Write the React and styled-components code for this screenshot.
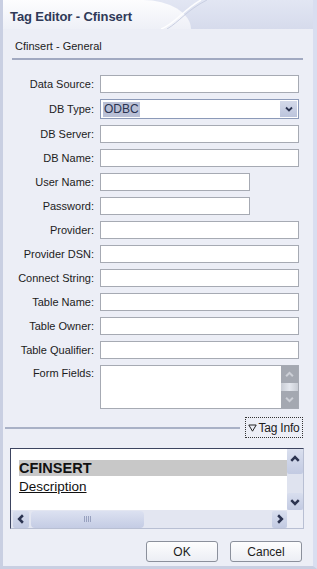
import React from 'react';
import styled, { createGlobalStyle } from 'styled-components';

const GlobalStyle = createGlobalStyle`
  html, body {
    margin: 0;
    padding: 0;
    background: #eceef6;
  }
  * { box-sizing: border-box; }
`;

const Window = styled.div`
  width: 317px;
  height: 569px;
  display: flex;
  flex-direction: column;
  background: #eceef6;
  border-left: 3px solid #c9cfe2;
  border-right: 4px solid #d9def0;
  border-bottom: 3px solid #c9cfe2;
  font-family: "Liberation Sans", Arial, sans-serif;
  overflow: hidden;
`;

const TitleBar = styled.div`
  height: 29px;
  display: flex;
  background: linear-gradient(#e2e6f3, #d6dbec);
  position: relative;
`;

const TitleTab = styled.div`
  width: 188px;
  display: flex;
  align-items: center;
  padding-left: 7px;
  padding-top: 3px;
  background: linear-gradient(#fdfdfe, #eef0f7);
  border-top-right-radius: 48px 29px;
  color: #2f3a58;
  font-weight: bold;
  font-size: 13px;
  letter-spacing: -0.1px;
`;

const Swoosh = styled.svg`
  position: absolute;
  left: 150px;
  top: 0;
`;

const Body = styled.div`
  flex: 1;
  display: flex;
  flex-direction: column;
`;

const SectionHeader = styled.div`
  margin: 11px 10px 0 9px;
  padding: 0 0 6px 3px;
  font-size: 11px;
  color: #1c1c1c;
  border-bottom: 2px solid #a1a9c1;
`;

const FormGrid = styled.div`
  display: grid;
  grid-template-columns: 82px 199px;
  column-gap: 6px;
  row-gap: 6px;
  align-items: center;
  margin: 15px 0 0 9px;
`;

const Label = styled.label`
  font-size: 11px;
  color: #1c1c1c;
  text-align: right;
  align-self: ${p => (p.$top ? 'start' : 'center')};
  padding-top: ${p => (p.$top ? '2px' : '0')};
`;

const TextInput = styled.div`
  width: ${p => (p.$short ? '150px' : '199px')};
  height: 18px;
  background: #fff;
  border: 1px solid #a6aab3;
`;

const Select = styled.div`
  width: 199px;
  height: 20px;
  display: flex;
  align-items: center;
  background: #fff;
  border: 1px solid #8c9ab8;
  padding: 1px;
`;

const SelectValue = styled.div`
  flex: 1;
  display: flex;
  align-items: center;
  font-size: 12px;
  color: #2a3350;
  padding-left: 1px;
`;

const Highlight = styled.span`
  background: #b9c0d6;
  padding: 0 1px;
  line-height: 15px;
`;

const SelectButton = styled.div`
  width: 17px;
  height: 16px;
  display: flex;
  align-items: center;
  justify-content: center;
  background: linear-gradient(#d4d9e9, #bcc4dc);
`;

const TextArea = styled.div`
  width: 199px;
  height: 44px;
  display: flex;
  justify-content: flex-end;
  background: #fff;
  border: 1px solid #a6aab3;
`;

const DisabledBar = styled.div`
  width: 17px;
  display: flex;
  flex-direction: column;
  background: #a9adb6;
`;

const DisabledButton = styled.div`
  height: 17px;
  display: flex;
  align-items: center;
  justify-content: center;
  background: #a4a8b1;
`;

const DisabledMid = styled.div`
  flex: 1;
  background: linear-gradient(90deg, #c8ccd4, #e4e7ee, #c8ccd4);
`;

const InfoRow = styled.div`
  display: flex;
  align-items: center;
  margin: 8px 0 0 2px;
  gap: 5px;
`;

const InfoLine = styled.div`
  flex: 1;
  height: 2px;
  background: #a9b1c6;
`;

const InfoButton = styled.div`
  width: 58px;
  height: 21px;
  display: flex;
  align-items: center;
  justify-content: center;
  gap: 1px;
  margin-right: 10px;
  border: 1px dotted #333;
  font-size: 12px;
  color: #1c1c1c;
  letter-spacing: -0.2px;
`;

const InfoPanel = styled.div`
  margin: 10px 9px 0 7px;
  height: 81px;
  display: grid;
  grid-template-columns: 1fr 16px;
  grid-template-rows: 1fr 18px;
  border-top: 1px solid #3c4460;
  border-left: 1px solid #3c4460;
  border-right: 1px solid #b8bfd3;
  border-bottom: 1px solid #b8bfd3;
  background: #fff;
`;

const ListArea = styled.div`
  padding: 11px 0 0 8px;
  display: flex;
  flex-direction: column;
`;

const TagName = styled.div`
  height: 16px;
  display: flex;
  align-items: center;
  background: #c8c8c8;
  font-weight: bold;
  font-size: 14.5px;
  color: #111;
`;

const DescLink = styled.div`
  margin-top: 3px;
  font-size: 13.5px;
  color: #111;
  text-decoration: underline;
`;

const VScroll = styled.div`
  display: flex;
  flex-direction: column;
  justify-content: space-between;
  background: #dfe3ef;
  padding-top: 1px;
`;

const ScrollBtn = styled.div`
  width: ${p => p.$w || '16px'};
  height: ${p => p.$h || '17px'};
  display: flex;
  align-items: ${p => (p.$alignTop ? 'flex-start' : 'center')};
  padding-top: ${p => (p.$alignTop ? '4px' : '0')};
  justify-content: center;
  background: linear-gradient(#d8deee, #c2cae2);
  border-radius: 2px;
`;

const HScroll = styled.div`
  display: flex;
  align-items: center;
  gap: 2px;
  background: #e3e6f1;
  padding: 0 0 0 2px;
`;

const Thumb = styled.div`
  width: 113px;
  height: 17px;
  display: flex;
  align-items: center;
  justify-content: center;
  gap: 1px;
  background: linear-gradient(#dce1f1, #c4cce4);
  border-radius: 4px;
`;

const Grip = styled.span`
  width: 1px;
  height: 6px;
  background: #98a1bf;
`;

const HTrack = styled.div`
  flex: 1;
`;

const Corner = styled.div`
  background: #eceef6;
`;

const Footer = styled.div`
  display: flex;
  justify-content: flex-end;
  gap: 12px;
  margin: 12px 11px 0 0;
`;

const Button = styled.div`
  width: 72px;
  height: 21px;
  display: flex;
  align-items: center;
  justify-content: center;
  background: linear-gradient(#fdfdfe, #eceef4);
  border: 1px solid #8b909c;
  border-radius: 3px;
  font-size: 12px;
  color: #1c1c1c;
`;

const Chevron = ({ dir = 'down', color = '#2b3350', size = 8, weight = 1.8 }) => {
  const paths = {
    down: 'M1 2.5 L4 5.5 L7 2.5',
    up: 'M1 5.5 L4 2.5 L7 5.5',
    left: 'M5.5 1 L2.5 4 L5.5 7',
    right: 'M2.5 1 L5.5 4 L2.5 7',
  };
  return (
    <svg width={size} height={size} viewBox="0 0 8 8">
      <path d={paths[dir]} fill="none" stroke={color} strokeWidth={weight} />
    </svg>
  );
};

const fields = [
  ['Data Source:', 'input'],
  ['DB Type:', 'select'],
  ['DB Server:', 'input'],
  ['DB Name:', 'input'],
  ['User Name:', 'short'],
  ['Password:', 'short'],
  ['Provider:', 'input'],
  ['Provider DSN:', 'input'],
  ['Connect String:', 'input'],
  ['Table Name:', 'input'],
  ['Table Owner:', 'input'],
  ['Table Qualifier:', 'input'],
];

export default function App() {
  return (
    <>
      <GlobalStyle />
      <Window>
        <TitleBar>
          <TitleTab>Tag Editor - Cfinsert</TitleTab>
          <Swoosh width="60" height="29" viewBox="0 0 60 29">
            <path d="M8 29 C 22 24, 30 10, 48 0" fill="none" stroke="#ffffff" strokeWidth="1.5" opacity="0.9" />
            <path d="M14 29 C 26 22, 34 10, 54 0" fill="none" stroke="#c9cfe2" strokeWidth="1" />
          </Swoosh>
        </TitleBar>
        <Body>
          <SectionHeader>Cfinsert - General</SectionHeader>
          <FormGrid>
            {fields.map(([label, kind]) => (
              <React.Fragment key={label}>
                <Label>{label}</Label>
                {kind === 'select' ? (
                  <Select>
                    <SelectValue>
                      <Highlight>ODBC</Highlight>
                    </SelectValue>
                    <SelectButton>
                      <Chevron dir="down" />
                    </SelectButton>
                  </Select>
                ) : (
                  <TextInput $short={kind === 'short'} />
                )}
              </React.Fragment>
            ))}
            <Label $top>Form Fields:</Label>
            <TextArea>
              <DisabledBar>
                <DisabledButton>
                  <Chevron dir="up" color="#cdd0d7" size={9} />
                </DisabledButton>
                <DisabledMid />
                <DisabledButton>
                  <Chevron dir="down" color="#cdd0d7" size={9} />
                </DisabledButton>
              </DisabledBar>
            </TextArea>
          </FormGrid>
          <InfoRow>
            <InfoLine />
            <InfoButton>
              <svg width="9" height="8" viewBox="0 0 9 8">
                <path d="M0.8 1 L8.2 1 L4.5 7.2 Z" fill="none" stroke="#222" strokeWidth="1" />
              </svg>
              Tag Info
            </InfoButton>
          </InfoRow>
          <InfoPanel>
            <ListArea>
              <TagName>CFINSERT</TagName>
              <DescLink>Description</DescLink>
            </ListArea>
            <VScroll>
              <ScrollBtn $h="24px" $alignTop>
                <Chevron dir="up" size={10} weight={2} />
              </ScrollBtn>
              <ScrollBtn>
                <Chevron dir="down" size={10} weight={2} />
              </ScrollBtn>
            </VScroll>
            <HScroll>
              <ScrollBtn>
                <Chevron dir="left" size={10} weight={2} />
              </ScrollBtn>
              <Thumb>
                <Grip /><Grip /><Grip /><Grip />
              </Thumb>
              <HTrack />
              <ScrollBtn $w="15px">
                <Chevron dir="right" size={10} weight={2} />
              </ScrollBtn>
            </HScroll>
            <Corner />
          </InfoPanel>
          <Footer>
            <Button>OK</Button>
            <Button>Cancel</Button>
          </Footer>
        </Body>
      </Window>
    </>
  );
}
